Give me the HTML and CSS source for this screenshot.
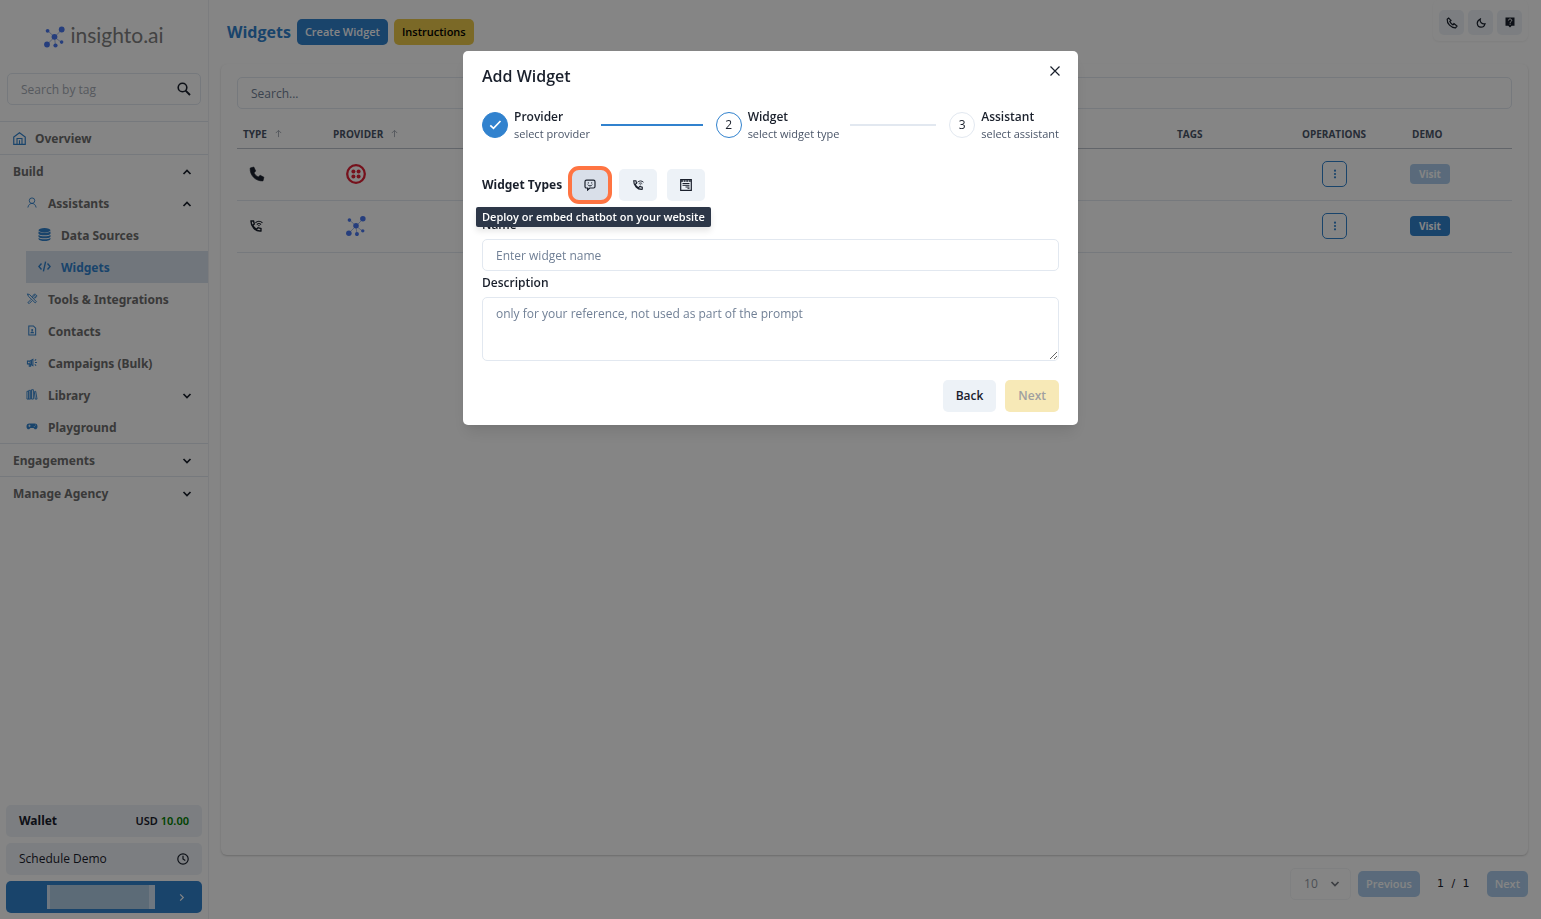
FILE: index.html
```html
<!DOCTYPE html>
<html lang="en">
<head>
    <meta charset="UTF-8">
    <meta name="viewport" content="width=device-width, initial-scale=1.0">
    <link rel="stylesheet" href="styles.css">
    <title>Widgets - insighto.ai</title>
</head>
<body>
    <!-- Shared icons -->
    <svg class="icon-defs" aria-hidden="true">
        <symbol id="logo-mark" viewBox="0 0 21 21">
            <path d="M3.5 4 10.5 10.5 18 3M3 18l7.5-7.5 7 5.500M10.500 10.500l1 9" fill="none" stroke="#a9bbe8" stroke-width="1"/>
            <g fill="#4a78f0">
                <circle cx="3.600" cy="4.300" r="1.900"/>
                <circle cx="17.700" cy="3" r="2.900"/>
                <circle cx="10.500" cy="10.300" r="2.900"/>
                <circle cx="3" cy="18" r="2.900"/>
                <circle cx="11.500" cy="19" r="2.100"/>
                <circle cx="17.600" cy="15.600" r="1.800"/>
            </g>
        </symbol>
        <symbol id="chevron" viewBox="0 0 10 10">
            <path d="M1.500 3 5 6.500 8.500 3" fill="none" stroke="currentColor" stroke-width="1.700"/>
        </symbol>
        <symbol id="phone-wifi" viewBox="0 0 24 24">
            <path d="M3.500 3.500h4.300l1.300 5-2.700 2.300c1.500 3 3.600 5.200 6.700 6.800l2.400-2.700 5 1.400v4.200C11 21.500 3 13 3.500 3.500z" fill="none" stroke="currentColor" stroke-width="2.400"/>
            <path d="M11 6.500c3.500-3.500 8.500-3.500 12 0M13.500 9.500c2-2 5-2 7 0" fill="none" stroke="currentColor" stroke-width="1.900"/>
            <path d="M17 13l-2-2.200h4z" fill="currentColor"/>
        </symbol>
        <symbol id="arrow-up" viewBox="0 0 10 10">
            <path d="M5 9V1.500M2 4.500l3-3 3 3" fill="none" stroke="currentColor" stroke-width="1"/>
        </symbol>
        <symbol id="dots" viewBox="0 0 12 12">
            <circle cx="6" cy="2" r="1.300"/><circle cx="6" cy="6" r="1.300"/><circle cx="6" cy="10" r="1.300"/>
        </symbol>
    </svg>

    <div class="app">
        <aside class="sidebar">
            <a href="#" class="logo">
                <svg width="21" height="22"><use href="#logo-mark"/></svg>
                <span>insighto.ai</span>
            </a>

            <div class="tag-search">
                <input type="text" placeholder="Search by tag" aria-label="Search by tag">
                <svg width="14" height="14" viewBox="0 0 14 14" fill="none" stroke="currentColor"><circle cx="5.500" cy="5.500" r="4.300" stroke-width="1.600"/><path d="M8.600 8.600 13 13" stroke-width="1.900"/></svg>
            </div>

            <nav class="menu">
                <a href="#" class="item top">
                    <svg class="ico" viewBox="0 0 12 12" fill="none" stroke="currentColor"><path d="M.700 11.400V4.600L6 .700l5.300 3.900v6.800z" stroke-width="1.100"/><path d="M3.700 11V6h4.600v5M6 7.500V11" stroke-width="1"/></svg>
                    Overview
                </a>
                <div class="group">
                    <a href="#" class="item section">Build <svg class="caret up"><use href="#chevron"/></svg></a>
                    <a href="#" class="item sub">
                        <svg class="ico" viewBox="0 0 12 12" fill="none" stroke="currentColor" stroke-width="1"><circle cx="6" cy="4" r="3"/><path d="M1.500 11.500C2 8.500 4 7 6 7s4 1.500 4.500 4.500"/></svg>
                        Assistants <svg class="caret up"><use href="#chevron"/></svg>
                    </a>
                    <a href="#" class="item nested">
                        <svg class="ico" viewBox="0 0 12 13" fill="currentColor"><ellipse cx="6" cy="2.200" rx="6" ry="2.200"/><path d="M0 3.500c2 1.800 10 1.800 12 0v2.300c-1 2-11 2-12 0zM0 7c2 1.800 10 1.800 12 0v1.800c-1 2-11 2-12 0zM0 9.900c2 1.800 10 1.800 12 0v1c-1 2.700-11 2.700-12 0z"/></svg>
                        Data Sources
                    </a>
                    <a href="#" class="item nested active">
                        <svg class="ico" viewBox="0 0 13 12" fill="none" stroke="currentColor" stroke-width="1.400"><path d="M3.500 3 .900 6l2.600 3M9.500 3l2.600 3-2.600 3M7.600 1.200 5.400 10.800"/></svg>
                        Widgets
                    </a>
                    <a href="#" class="item sub">
                        <svg class="ico" viewBox="0 0 12 12" fill="none" stroke="currentColor" stroke-width="1"><path d="M1 1l2.500.800L10.800 9.500 9.500 10.800 2 3.500zM7.500 4 6 5.500M5 7l-3.500 3.500L3 11.500 6 8.500M7 4.500C6.500 2.500 8 1 9.800 1.300L8.500 2.800l1 1 1.600-1.400C11.500 4.500 9.800 5.800 8 5.300"/></svg>
                        Tools &amp; Integrations
                    </a>
                    <a href="#" class="item sub">
                        <svg class="ico" viewBox="0 0 12 12"><path d="M2.500 1h5L10 3.500V11H2.500z" fill="none" stroke="currentColor" stroke-width="1.100"/><circle cx="6.200" cy="5.500" r="1.100" fill="currentColor"/><path d="M4.200 9c0-2.400 4-2.400 4 0z" fill="currentColor"/></svg>
                        Contacts
                    </a>
                    <a href="#" class="item sub">
                        <svg class="ico" viewBox="0 0 12 12" fill="none" stroke="currentColor" stroke-width="1.100"><path d="M1 4.500h2.500L7 2.500v7L3.500 7.500H1zM3 7.500V10h1.500V8M4 4.500v3M5.500 4v4M9 4l1.500-1.300M9.300 6h2M9 8l1.500 1.300"/></svg>
                        Campaigns (Bulk)
                    </a>
                    <a href="#" class="item sub">
                        <svg class="ico" viewBox="0 0 12 12" fill="none" stroke="currentColor" stroke-width="1"><path d="M.500 2.500h2v8.500h-2zM2.500 1.500h2V11h-2zM5.500.800h2V11h-2zM8.500 3l1.500-.500L11.500 11h-2z"/></svg>
                        Library <svg class="caret"><use href="#chevron"/></svg>
                    </a>
                    <a href="#" class="item sub">
                        <svg class="ico" viewBox="0 0 12 12"><path d="M3 2.700h6c2 0 3 1.300 3 3.200S11 9 9.700 9C8.500 9 8.500 7.500 7.500 7.500h-3C3.500 7.500 3.500 9 2.300 9 1 9 0 7.800 0 5.900s1-3.200 3-3.200z" fill="currentColor"/><path d="M2 5.300h2.500M3.200 4v2.600M8 6h.9M9.500 4.500h.9" stroke="#fff" stroke-width=".800"/></svg>
                        Playground
                    </a>
                </div>
                <a href="#" class="item top section">Engagements <svg class="caret"><use href="#chevron"/></svg></a>
                <a href="#" class="item section">Manage Agency <svg class="caret"><use href="#chevron"/></svg></a>
            </nav>

            <div class="sidebar-bottom">
                <button type="button" class="side-btn wallet">Wallet <span>USD <b>10.00</b></span></button>
                <button type="button" class="side-btn">Schedule Demo
                    <svg width="12" height="12" viewBox="0 0 12 12" fill="none" stroke="currentColor" stroke-width="1.200"><circle cx="6" cy="6" r="5.200"/><path d="M6 2.800V6l2.300 1.600"/></svg>
                </button>
                <button type="button" class="side-btn account" aria-label="Account">
                    <span class="account-name"></span>
                    <svg width="9" height="9" viewBox="0 0 10 10"><path d="M3.500 1.500 7 5 3.500 8.500" fill="none" stroke="currentColor" stroke-width="1.300"/></svg>
                </button>
            </div>
        </aside>

        <main class="main">
            <header class="page-header">
                <h1>Widgets</h1>
                <button type="button" class="btn blue">Create Widget</button>
                <button type="button" class="btn yellow">Instructions</button>
                <div class="quick">
                    <button type="button" aria-label="Call"><svg width="12" height="12" viewBox="0 0 12 12" fill="none" stroke="currentColor" stroke-width="1.200"><path d="M1.200 2.300 2.700 1l2 2.200-.900 1.400c.700 1.500 1.700 2.500 3.200 3.300l1.500-.900L11 9l-1.500 1.800C5 11 .800 6.500 1.200 2.300zM3.500 4.500l2-1.300M7 8l1.200-1.800"/></svg></button>
                    <button type="button" aria-label="Dark mode"><svg width="10" height="10" viewBox="0 0 10 10" fill="none" stroke="currentColor" stroke-width="1.200"><path d="M4.300 1C3.500 4 6 6.500 9 5.800 8.300 8.300 6.500 9.300 4.800 9.200 1 9-.500 3.500 4.300 1z"/></svg></button>
                    <button type="button" aria-label="Help"><svg width="10" height="11" viewBox="0 0 10 11"><path d="M.500.500h9v8.300H6.700L5 10.500 3.300 8.800H.500z" fill="currentColor"/><path d="M3.400 3.500c0-2 3.300-2 3.300 0 0 1.100-1.600 1.200-1.600 2.300M5.100 6.700v1" fill="none" stroke="#fff" stroke-width="1"/></svg></button>
                </div>
            </header>

            <section class="card">
                <input type="text" class="search" placeholder="Search..." aria-label="Search">
                <table>
                    <colgroup>
                        <col class="col-type"><col><col class="col-tags"><col class="col-ops"><col class="col-demo">
                    </colgroup>
                    <thead>
                        <tr>
                            <th>Type <svg><use href="#arrow-up"/></svg></th>
                            <th>Provider <svg><use href="#arrow-up"/></svg></th>
                            <th>Tags</th>
                            <th>Operations</th>
                            <th>Demo</th>
                        </tr>
                    </thead>
                    <tbody>
                        <tr>
                            <td class="type"><svg width="16" height="16" viewBox="0 0 16 16"><path d="M1.200 2 4.800 1 6.700 4.900 5 6.900c.900 1.700 2.200 3 4.200 4l2-1.600 3.700 1.900-.900 3.700C6.500 15.500.500 9 1.200 2z" fill="currentColor" stroke="currentColor" stroke-width=".600"/></svg></td>
                            <td class="provider"><svg width="20" height="20" viewBox="0 0 20 20"><circle cx="10" cy="10" r="8.800" fill="none" stroke="#e22236" stroke-width="2.300"/><g fill="#e22236"><circle cx="7.400" cy="7.400" r="2"/><circle cx="12.600" cy="7.400" r="2"/><circle cx="7.400" cy="12.600" r="2"/><circle cx="12.600" cy="12.600" r="2"/></g></svg></td>
                            <td></td>
                            <td class="ops"><button type="button" aria-label="Operations"><svg width="12" height="10"><use href="#dots"/></svg></button></td>
                            <td class="demo"><button type="button" disabled>Visit</button></td>
                        </tr>
                        <tr>
                            <td class="type"><svg width="14" height="14"><use href="#phone-wifi"/></svg></td>
                            <td class="provider"><svg width="20" height="20"><use href="#logo-mark"/></svg></td>
                            <td></td>
                            <td class="ops"><button type="button" aria-label="Operations"><svg width="12" height="10"><use href="#dots"/></svg></button></td>
                            <td class="demo"><button type="button">Visit</button></td>
                        </tr>
                    </tbody>
                </table>
            </section>

            <footer class="pager">
                <div class="page-size">
                    <select aria-label="Rows per page" disabled><option>10</option></select>
                    <svg class="caret"><use href="#chevron"/></svg>
                </div>
                <button type="button" class="btn blue" disabled>Previous</button>
                <span>1 / 1</span>
                <button type="button" class="btn blue" disabled>Next</button>
            </footer>
        </main>
    </div>

    <!-- Add widget dialog -->
    <div class="overlay">
        <div class="modal" role="dialog" aria-modal="true" aria-labelledby="modalTitle">
            <button type="button" class="close" aria-label="Close"><svg width="10" height="10" viewBox="0 0 10 10"><path d="M.500.500l9 9M9.500.500l-9 9" stroke="currentColor" stroke-width="1.200"/></svg></button>
            <h2 id="modalTitle">Add Widget</h2>

            <ol class="steps">
                <li class="done">
                    <span class="dot"><svg width="13" height="10" viewBox="0 0 13 10"><path d="M1.300 5.300 4.500 8.300 11.500 1" fill="none" stroke="currentColor" stroke-width="1.700"/></svg></span>
                    <div><h3>Provider</h3><p>select provider</p></div>
                </li>
                <li class="current">
                    <span class="dot">2</span>
                    <div><h3>Widget</h3><p>select widget type</p></div>
                </li>
                <li>
                    <span class="dot">3</span>
                    <div><h3>Assistant</h3><p>select assistant</p></div>
                </li>
            </ol>

            <form>
                <div class="types">
                    <span class="types-label">Widget Types</span>
                    <button type="button" class="selected" aria-label="Chatbot"><svg width="12" height="12" viewBox="0 0 12 12" fill="none" stroke="currentColor"><path d="M2.500 1.200h7c.900 0 1.500.600 1.500 1.500v4.800C11 8.400 10.400 9 9.500 9H5.800L3.600 11V9H2.500C1.600 9 1 8.400 1 7.500V2.700c0-.900.600-1.500 1.500-1.500z" stroke-width="1.200"/><path d="M4.300 3.300v1.200M7.700 3.300v1.200M3.800 5.600c.800 1.800 3.600 1.800 4.400 0" stroke-width="1"/></svg></button>
                    <button type="button" aria-label="Phone"><svg width="12" height="12"><use href="#phone-wifi"/></svg></button>
                    <button type="button" aria-label="Form"><svg width="12" height="12" viewBox="0 0 12 12" fill="none" stroke="currentColor"><path d="M.700.700h10.600v10.600H.700z" stroke-width="1.200"/><path d="M1 2h10" stroke-width="1.300" stroke-dasharray="2 .600"/><path d="M2.500 4.500h7M2.500 6.300h7M5.500 8h4M7.500 9.300h2" stroke-width="1"/></svg></button>
                    <div class="tooltip" role="tooltip">Deploy or embed chatbot on your website</div>
                </div>

                <label for="name">Name</label>
                <input type="text" id="name" placeholder="Enter widget name">
                <label for="description">Description</label>
                <textarea id="description" placeholder="only for your reference, not used as part of the prompt"></textarea>

                <div class="actions">
                    <button type="button">Back</button>
                    <button type="submit" class="next" disabled>Next</button>
                </div>
            </form>
        </div>
    </div>
</body>
</html>
```

FILE: styles.css
```css
* {
    box-sizing: border-box;
}

body {
    margin: 0;
    font-family: 'Segoe UI', 'Open Sans', sans-serif;
    font-size: 12px;
    line-height: 20px;
    color: #1a202c;
    background-color: #fff;
}

h1, h2, h3, p, ol {
    margin: 0;
    padding: 0;
}

a {
    color: inherit;
    text-decoration: none;
}

svg {
    display: block;
    flex-shrink: 0;
}

button, input, select, textarea {
    font: inherit;
    color: inherit;
}

button {
    display: flex;
    align-items: center;
    justify-content: center;
    padding: 0;
    border: none;
    border-radius: 5px;
    cursor: pointer;
}

input, textarea {
    display: block;
    width: 100%;
    padding: 1px 13px 0;
    border: 1px solid #e2e8f0;
    border-radius: 5px;
    background: transparent;
}

.icon-defs {
    position: absolute;
    width: 0;
    height: 0;
}

.app {
    display: flex;
    min-height: 100vh;
}

/* Sidebar */
.sidebar {
    display: flex;
    flex-direction: column;
    width: 209px;
    flex-shrink: 0;
    border-right: 1px solid #edf0f4;
}

.logo {
    display: flex;
    align-items: center;
    justify-content: center;
    gap: 5px;
    height: 73px;
    font-family: Lato, sans-serif;
    font-size: 21px;
    color: #808080;
}

.logo span {
    padding-bottom: 4px;
}

.tag-search {
    display: flex;
    align-items: center;
    height: 32px;
    margin: 0 7px 16px;
    padding-right: 9px;
    border: 1px solid #e2e8f0;
    border-radius: 5px;
}

.tag-search input {
    border: none;
}

.tag-search input::placeholder {
    color: #a5abb5;
}

.item {
    display: flex;
    align-items: center;
    height: 32px;
    padding: 1px 16px 0 13px;
    font-family: 'Segoe UI', 'Noto Sans', sans-serif;
    font-weight: 700;
    color: #6e6e6e;
}

.item.top {
    height: 34px;
    border-top: 1px solid #e2e8f0;
    border-bottom: 1px solid #e2e8f0;
}

.ico {
    width: 13px;
    height: 13px;
    margin-right: 9px;
    color: #3182ce;
}

.item.sub {
    padding-left: 26px;
}

.item.nested {
    margin-left: 26px;
    padding-left: 12px;
}

.item.sub .ico {
    width: 12px;
    height: 11px;
    margin: 0 10px 2px 0;
}

.item.nested .ico {
    margin: 0 10px 2px 0;
}

.item.active {
    color: #3182ce;
    background-color: #d9e2ee;
}

.caret {
    width: 10px;
    height: 10px;
    margin-left: auto;
    color: #1a202c;
}

.caret.up {
    transform: rotate(180deg);
}

.sidebar-bottom {
    display: flex;
    flex-direction: column;
    gap: 6px;
    margin-top: auto;
    padding: 0 6px 6px;
}

.side-btn {
    justify-content: space-between;
    height: 32px;
    padding: 0 13px;
    background-color: #edf2f7;
}

.wallet {
    font-family: 'Segoe UI', 'Noto Sans', sans-serif;
    font-weight: 700;
}

.wallet span {
    font-size: 11px;
    font-weight: 600;
}

.wallet b {
    font-weight: 600;
    color: green;
}

.account {
    color: #fff;
    background-color: #3182ce;
    padding: 0 16px 0 41px;
}

.account-name {
    width: 108px;
    height: 24px;
    border: solid #d3e4f5;
    border-width: 0 6px 0 3px;
    background-color: #b0cde4;
}

/* Main area */
.main {
    display: flex;
    flex-direction: column;
    flex: 1;
    padding: 0 13px 19px 12px;
}

.page-header {
    display: flex;
    align-items: center;
    gap: 6px;
    height: 64px;
    padding-left: 6px;
}

.page-header h1 {
    font-size: 16px;
    font-weight: 700;
    color: #3182ce;
}

.btn {
    height: 26px;
    padding: 0 8px;
    font-size: 11px;
    font-weight: 600;
}

.btn.blue {
    color: #fff;
    background-color: #3182ce;
}

.btn.yellow {
    color: #000;
    background-color: #ecc94b;
}

.btn:disabled, .demo button:disabled {
    opacity: 0.4;
}

.quick {
    display: flex;
    align-self: flex-start;
    gap: 4px;
    margin-left: auto;
    padding: 10px 6px 6px;
    border-radius: 6px;
    box-shadow: 0 1px 2px rgba(0, 0, 0, 0.05);
}

.quick button {
    width: 25px;
    height: 25px;
    background-color: #edf2f7;
}

.card {
    flex: 1;
    padding: 13px 16px;
    border-radius: 6px;
    box-shadow: 0 1px 2px rgba(0, 0, 0, 0.2);
}

.search {
    height: 32px;
}

.search::placeholder {
    color: #718096;
}

table {
    width: 100%;
    margin-top: 12px;
    border-collapse: collapse;
    table-layout: fixed;
}

.col-type {
    width: 90px;
}

.col-tags {
    width: 125px;
}

.col-ops {
    width: 110px;
}

.col-demo {
    width: 106px;
}

th {
    height: 27px;
    padding: 0 6px;
    border-bottom: 1px solid #bcc2cb;
    font-size: 10px;
    font-weight: 700;
    text-align: left;
    text-transform: uppercase;
    color: #4a5568;
}

th svg {
    display: inline-block;
    width: 9px;
    height: 9px;
    margin-left: 4px;
    color: #a0a6b0;
}

td {
    height: 52px;
    padding: 0;
    border-bottom: 1px solid #e2e8f0;
}

.type {
    padding-left: 12px;
}

.provider {
    padding-left: 19px;
}

.ops {
    padding-left: 26px;
}

.ops button {
    width: 25px;
    height: 26px;
    border: 1px solid #3182ce;
    background: none;
    fill: #3182ce;
}

.demo {
    padding-left: 4px;
}

.demo button {
    width: 40px;
    height: 20px;
    border-radius: 4px;
    font-size: 10px;
    font-weight: 700;
    color: #fff;
    background-color: #3182ce;
}

.pager {
    display: flex;
    align-items: center;
    justify-content: flex-end;
    gap: 7px;
    height: 32px;
    margin-top: 13px;
}

.pager span {
    padding: 0 10px;
    font-family: 'DejaVu Sans', sans-serif;
    font-size: 11px;
    word-spacing: 4px;
}

.page-size {
    display: flex;
    align-items: center;
    width: 61px;
    height: 32px;
    padding: 0 10px 0 13px;
    border: 1px solid #edf0f4;
    border-radius: 5px;
    opacity: 0.6;
}

.page-size select {
    border: none;
    padding: 0;
    background: none;
    appearance: none;
    opacity: 1;
    color: #4a5568;
}

/* Modal */
.overlay {
    position: fixed;
    inset: 0;
    padding-top: 51px;
    background-color: rgba(0, 0, 0, 0.48);
}

.modal {
    position: relative;
    max-width: 615px;
    margin: 0 auto;
    padding: 12px 19px 13px;
    border-radius: 5px;
    background-color: #fff;
    box-shadow: 0 10px 15px -3px rgba(0, 0, 0, 0.1), 0 4px 6px -2px rgba(0, 0, 0, 0.05);
}

.close {
    position: absolute;
    top: 7px;
    right: 10px;
    width: 26px;
    height: 26px;
    background: none;
}

.modal h2 {
    font-size: 16px;
    font-weight: 600;
    line-height: 26px;
}

.steps {
    display: flex;
    gap: 13px;
    margin-top: 19px;
    list-style: none;
}

.steps li {
    display: flex;
    align-items: center;
    gap: 6px;
}

.steps li:not(:last-child) {
    flex: 1;
}

/* line to the next step */
.steps li:not(:last-child)::after {
    content: "";
    flex: 1;
    height: 2px;
    margin-left: 5px;
    background-color: #e2e8f0;
}

.steps li.done::after {
    background-color: #3182ce;
}

.dot {
    display: flex;
    align-items: center;
    justify-content: center;
    width: 26px;
    height: 26px;
    border: 1px solid #e2e8f0;
    border-radius: 50%;
}

.done .dot {
    color: #fff;
    border-color: #3182ce;
    background-color: #3182ce;
}

.current .dot {
    border-color: #3182ce;
}

.steps h3 {
    font-size: 12px;
    font-weight: 600;
    line-height: 17px;
}

.steps p {
    font-size: 11px;
    line-height: 17px;
    color: #4a5568;
}

.types {
    position: relative;
    display: flex;
    align-items: center;
    gap: 10px;
    margin: 27px 0 12px;
}

.types-label {
    margin-right: -1px;
    font-family: 'Segoe UI', 'Noto Sans', sans-serif;
    font-weight: 700;
}

.types button {
    width: 38px;
    height: 32px;
    background-color: #edf2f7;
}

.types .selected {
    border-radius: 8px;
    background-color: #d9dfe9;
    outline: 4px solid #ff7442;
    outline-offset: -1px;
}

.tooltip {
    position: absolute;
    top: 38px;
    left: -6px;
    padding: 0 6px;
    border-radius: 2px;
    font-size: 11px;
    font-weight: 600;
    white-space: nowrap;
    color: #fff;
    background-color: #2d3748;
    box-shadow: 0 4px 6px rgba(0, 0, 0, 0.1);
}

.modal label {
    display: block;
    height: 26px;
    font-weight: 600;
    line-height: 23px;
}

.modal input {
    height: 32px;
}

.modal textarea {
    height: 64px;
    padding-top: 6px;
    resize: vertical;
}

.modal input::placeholder, .modal textarea::placeholder {
    color: #718096;
}

.actions {
    display: flex;
    justify-content: flex-end;
    gap: 9px;
    margin-top: 19px;
}

.actions button {
    height: 32px;
    padding: 0 13px;
    font-weight: 600;
    background-color: #edf2f7;
}

.actions .next {
    color: #a0a0a0;
    background-color: #f7e9b7;
}
```
